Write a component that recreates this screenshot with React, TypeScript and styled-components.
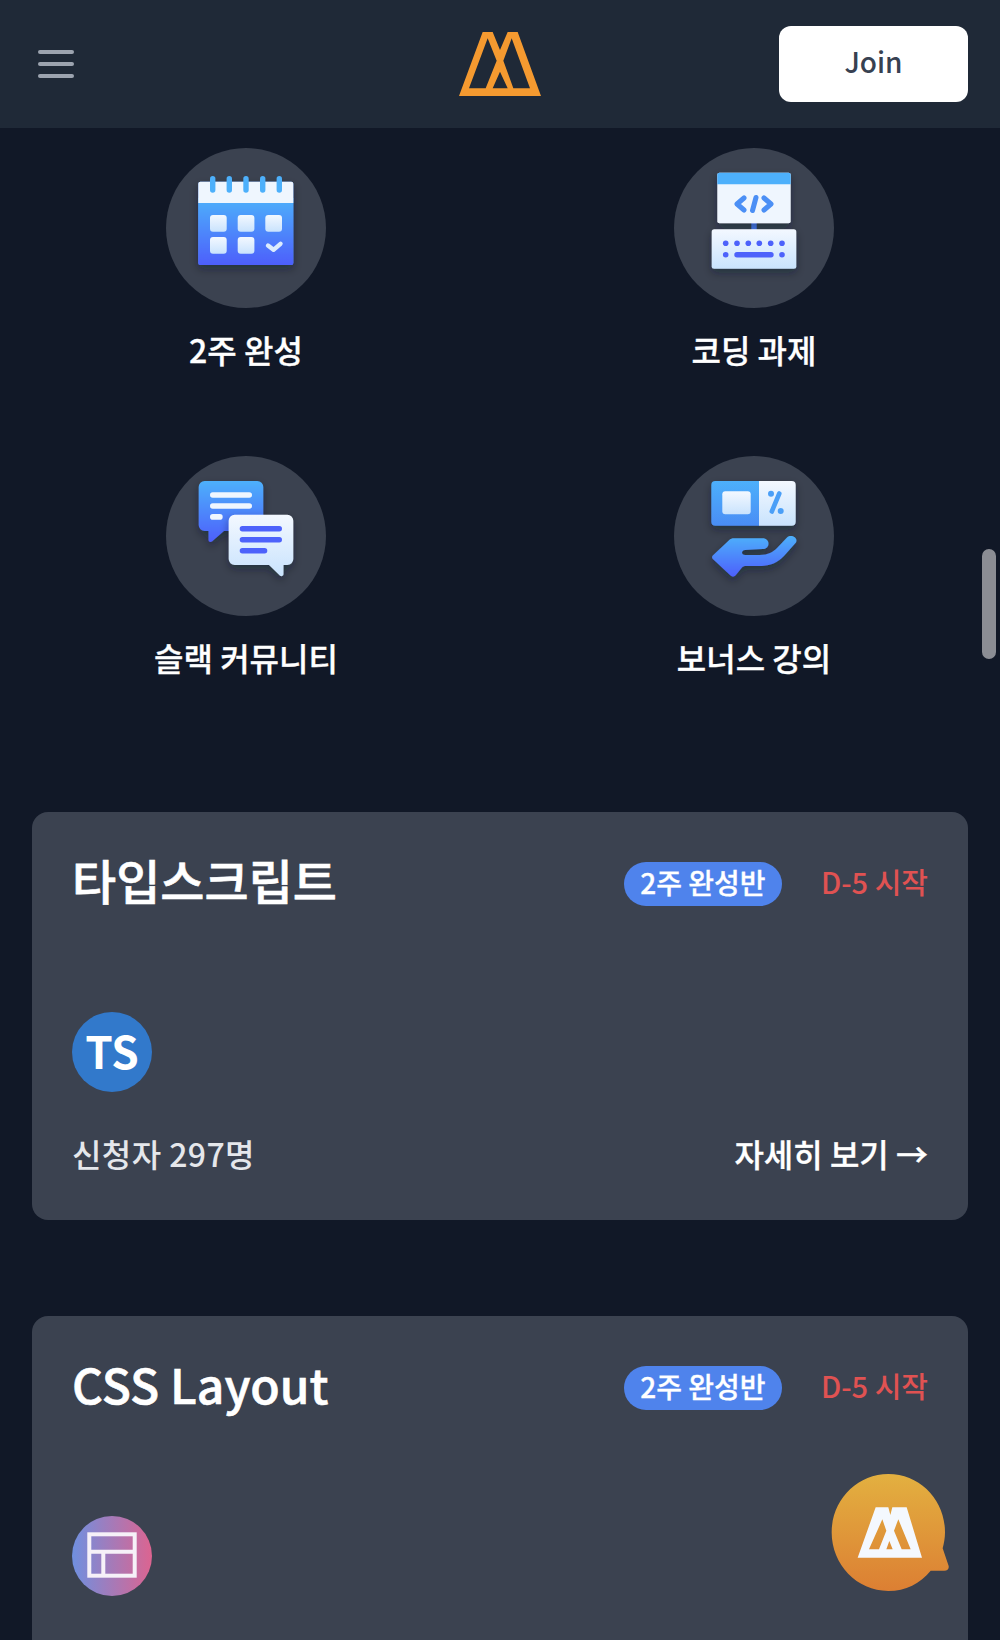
import * as React from "react";
import styled, { createGlobalStyle } from "styled-components";

const colors = {
	page: "#111827",
	header: "#1f2937",
	panel: "#3b4250",
	blue: "#4f83ec",
	red: "#e05252",
	text: "#e5e7eb",
	orange: "#f59a30",
};

const GlobalStyle = createGlobalStyle`
	html, body {
		margin: 0;
		padding: 0;
		height: 1640px;
		overflow: hidden;
		background: ${colors.page};
	}
	body {
		font-family: "Noto Sans CJK KR", "Noto Sans", sans-serif;
		color: #fff;
	}
`;

const Page = styled.div`
	height: 1640px;
	overflow: hidden;
	position: relative;
`;

const Header = styled.header`
	height: 128px;
	background: ${colors.header};
	display: grid;
	grid-template-columns: 1fr auto 1fr;
	align-items: center;
	padding: 0 32px;
	box-sizing: border-box;
`;

const Burger = styled.div`
	display: flex;
	flex-direction: column;
	gap: 8px;
	width: 36px;
	margin-left: 6px;
	span {
		display: block;
		height: 4px;
		border-radius: 2px;
		background: #9ca3af;
	}
`;

const JoinButton = styled.button`
	justify-self: end;
	width: 189px;
	height: 76px;
	padding: 0 0 6px;
	border: 0;
	border-radius: 12px;
	background: #fff;
	color: #374151;
	font-family: inherit;
	font-size: 28px;
	font-weight: 500;
`;

const Features = styled.section`
	display: grid;
	grid-template-columns: 1fr 1fr;
	column-gap: 80px;
	row-gap: 86px;
	padding: 20px 32px 0;
`;

const Feature = styled.div`
	display: flex;
	flex-direction: column;
	align-items: center;
	gap: 21px;
`;

const FeatureCircle = styled.div`
	width: 160px;
	height: 160px;
	border-radius: 50%;
	background: ${colors.panel};
	svg {
		display: block;
	}
`;

const FeatureLabel = styled.div`
	font-size: 32px;
	font-weight: 500;
	line-height: 41px;
	-webkit-text-stroke: 0.3px #fff;
`;

const Cards = styled.section`
	display: flex;
	flex-direction: column;
	gap: 96px;
	margin-top: 134px;
	padding: 0 32px;
`;

const Card = styled.article`
	box-sizing: border-box;
	min-height: 408px;
	background: ${colors.panel};
	border-radius: 16px;
	padding: 40px;
`;

const CardTop = styled.div`
	display: flex;
	align-items: center;
	height: 64px;
`;

const CardTitle = styled.h2`
	margin: 0 0 10px;
	flex: 1;
	font-size: 48px;
	font-weight: 500;
	line-height: 54px;
	-webkit-text-stroke: 0.6px #fff;
`;

const Badge = styled.span`
	display: flex;
	align-items: center;
	justify-content: center;
	box-sizing: border-box;
	width: 158px;
	height: 44px;
	padding-bottom: 4px;
	border-radius: 22px;
	background: ${colors.blue};
	font-size: 28px;
	font-weight: 500;
	-webkit-text-stroke: 0.3px #fff;
`;

const Start = styled.span`
	margin: 0 0 6px 39px;
	color: ${colors.red};
	font-size: 29px;
	font-weight: 500;
`;

const Avatar = styled.div<{ $bg: string }>`
	display: flex;
	align-items: center;
	justify-content: center;
	box-sizing: border-box;
	width: 80px;
	height: 80px;
	margin-top: 96px;
	border-radius: 50%;
	background: ${(p) => p.$bg};
	font-size: 44px;
	font-weight: 700;
	line-height: 1;
	padding-bottom: ${(p) => (p.$bg.startsWith("#") ? "4px" : "0")};
`;

const CardBottom = styled.div`
	display: flex;
	align-items: center;
	justify-content: space-between;
	height: 48px;
	margin-top: 40px;
	padding-bottom: 6px;
	box-sizing: border-box;
`;

const Count = styled.span`
	color: ${colors.text};
	font-size: 32px;
	font-weight: 500;
	letter-spacing: 0.4px;
`;

const More = styled.a`
	font-size: 32px;
	font-weight: 500;
	-webkit-text-stroke: 0.3px #fff;
`;

const ChatButton = styled.svg`
	position: absolute;
	left: 830px;
	top: 1472px;
	width: 120px;
	height: 120px;
`;

const Scrollbar = styled.div`
	position: absolute;
	left: 982px;
	top: 549px;
	width: 14px;
	height: 110px;
	border-radius: 7px;
	background: #8b8d94;
`;

const Logo = () => (
	<svg width="82" height="64" viewBox="42 36 246 192">
		<path
			fillRule="evenodd"
			fill={colors.orange}
			d="M42 228 113 36H143L165 90 188 36H218L288 228ZM128 55 72 205H122L155 122ZM200 55 255 205H205L175 122ZM165 155 143 205H188Z"
		/>
	</svg>
);

const Defs = () => (
	<defs>
		<linearGradient id="blue" x1="0" y1="0" x2="0" y2="1">
			<stop offset="0" stopColor="#4db0fb" />
			<stop offset="1" stopColor="#4d5ffb" />
		</linearGradient>
		<linearGradient id="sky" x1="0" y1="0" x2="0" y2="1">
			<stop offset="0" stopColor="#4db0fb" />
			<stop offset="1" stopColor="#4a8df5" />
		</linearGradient>
		<linearGradient id="ice" x1="0" y1="0" x2="0" y2="1">
			<stop offset="0" stopColor="#f3f8ff" />
			<stop offset="1" stopColor="#c9e3fd" />
		</linearGradient>
		<filter id="drop" x="-20%" y="-20%" width="140%" height="150%">
			<feDropShadow dx="0" dy="4" stdDeviation="4" floodColor="#111827" floodOpacity="0.4" />
		</filter>
	</defs>
);

const CalendarIcon = () => (
	<svg width="160" height="160" viewBox="0 0 160 160">
		<Defs />
		<g filter="url(#drop)">
			<rect x="32.3" y="33.7" width="95" height="83.3" rx="2" fill="#4a8df5" />
			<path d="M32.3 50V115a2 2 0 0 0 2 2H125.3a2 2 0 0 0 2-2V50Z" fill="url(#blue)" />
			<path d="M32.3 55V35.7a2 2 0 0 1 2-2H125.3a2 2 0 0 1 2 2V55Z" fill="#eff6fe" />
		</g>
		{[46.7, 63.3, 80, 96.7, 113.3].map((x) => (
			<rect key={x} x={x - 2.7} y="28" width="5.4" height="16.7" rx="2.7" fill="#4db0fb" />
		))}
		{[44, 71.7, 99.3].map((x) => (
			<rect key={x} x={x} y="67" width="16.7" height="16.7" rx="3" fill="url(#ice)" />
		))}
		{[44, 71.7].map((x) => (
			<rect key={x} x={x} y="89" width="16.7" height="16.7" rx="3" fill="url(#ice)" />
		))}
		<path d="M102 97.5l5.5 4.3 7-6" fill="none" stroke="#dcecfd" strokeWidth="4.4" strokeLinecap="round" strokeLinejoin="round" />
	</svg>
);

const CodeIcon = () => (
	<svg width="160" height="160" viewBox="0 0 160 160">
		<Defs />
		<rect x="77.3" y="75" width="5.4" height="7" fill="#4d7cfb" />
		<g filter="url(#drop)">
			<rect x="43.3" y="24.7" width="73.4" height="50.6" rx="2" fill="#eff6fe" />
			<path d="M43.3 36.3V26.7a2 2 0 0 1 2-2H114.7a2 2 0 0 1 2 2V36.3Z" fill="#4db0fb" />
			<rect x="37.7" y="81.3" width="84.6" height="39.4" rx="2.5" fill="url(#ice)" />
		</g>
		<path d="M70 50 63 56 70 62M90 50 97 56 90 62M82 49.5 78.5 62.5" fill="none" stroke="#4b8ff5" strokeWidth="5" strokeLinecap="round" strokeLinejoin="round" />
		{[51.7, 63, 74.3, 85.3, 96.7, 108].map((x) => (
			<circle key={x} cx={x} cy="95.3" r="2.8" fill="#4d62fb" />
		))}
		<circle cx="51.7" cy="106.7" r="2.8" fill="#4d62fb" />
		<circle cx="108" cy="106.7" r="2.8" fill="#4d62fb" />
		<rect x="60.3" y="104" width="39.4" height="5.4" rx="2.7" fill="#4d62fb" />
	</svg>
);

const ChatIcon = () => (
	<svg width="160" height="160" viewBox="0 0 160 160">
		<Defs />
		<g filter="url(#drop)">
			<path d="M38.7 25H91.3a6 6 0 0 1 6 6V69a6 6 0 0 1-6 6H58L46 85.5C44.5 86.5 42.5 86 42.5 84V75H38.7a6 6 0 0 1-6-6V31a6 6 0 0 1 6-6Z" fill="url(#blue)" />
		</g>
		<rect x="44" y="36.3" width="42" height="5.4" rx="2.7" fill="#eff6fe" />
		<rect x="44" y="47.3" width="42" height="5.4" rx="2.7" fill="#eff6fe" />
		<rect x="44" y="58" width="12.7" height="5.7" rx="2.8" fill="#eff6fe" />
		<g filter="url(#drop)">
			<path d="M68.7 58.7H121.3a6 6 0 0 1 6 6V103a6 6 0 0 1-6 6H117.5V118c0 2-2.2 2.8-3.7 1.5L103 109H68.7a6 6 0 0 1-6-6V64.7a6 6 0 0 1 6-6Z" fill="url(#ice)" />
		</g>
		<rect x="73.7" y="70" width="42.3" height="5.4" rx="2.7" fill="#4d62fb" />
		<rect x="73.7" y="81" width="42.3" height="5.4" rx="2.7" fill="#4d62fb" />
		<rect x="73.7" y="92" width="27.6" height="5.4" rx="2.7" fill="#4d62fb" />
	</svg>
);

const BonusIcon = () => (
	<svg width="160" height="160" viewBox="0 0 160 160">
		<Defs />
		<g filter="url(#drop)">
			<path d="M85 25V69.7H41.3a4 4 0 0 1-4-4V29a4 4 0 0 1 4-4Z" fill="url(#sky)" />
			<path d="M85 25H117.7a4 4 0 0 1 4 4V65.7a4 4 0 0 1-4 4H85Z" fill="url(#ice)" />
		</g>
		<rect x="48.3" y="35.3" width="28.4" height="23" rx="3" fill="url(#ice)" />
		<circle cx="97" cy="37.8" r="3" fill="#4b9ff7" />
		<circle cx="106.7" cy="55" r="3" fill="#4b9ff7" />
		<path d="M105.3 37.5 97.8 55.5" stroke="#4b9ff7" strokeWidth="4.6" strokeLinecap="round" />
		<g filter="url(#drop)">
			<path d="M38.8 99.5 55 84.2C56.5 82.8 58 82.3 60 82.3H88.5C96.5 82.3 96.5 93 88.5 93L71 94C67 94.3 67 99 71 99H86C94 99 99 96 103 92L113 81.5C117 78 124.5 81.5 122 86.5L110 100C104 106.5 96 110 87 110H72C70 110 69 110.5 68 111.5L61.5 119.5C60 121 58 121 56.5 119.5L38.8 103C37.8 102 37.8 100.5 38.8 99.5Z" fill="url(#blue)" />
		</g>
	</svg>
);

const LayoutGlyph = () => (
	<svg width="80" height="80" viewBox="0 0 80 80" fill="none" stroke="#f6f1f8" strokeWidth="4">
		<rect x="17.3" y="18.3" width="45.4" height="41.4" />
		<path d="M17.3 35.7H62.7M31.3 35.7V59.7" />
	</svg>
);

type Course = {
	title: string;
	avatar: React.ReactNode;
	avatarBg: string;
	count?: number;
};

const features = [
	{ label: "2주 완성", icon: <CalendarIcon /> },
	{ label: "코딩 과제", icon: <CodeIcon /> },
	{ label: "슬랙 커뮤니티", icon: <ChatIcon /> },
	{ label: "보너스 강의", icon: <BonusIcon /> },
];

const courses: Course[] = [
	{ title: "타입스크립트", avatar: "TS", avatarBg: "#3279cb", count: 297 },
	{
		title: "CSS Layout",
		avatar: <LayoutGlyph />,
		avatarBg: "linear-gradient(90deg, #6f90e0, #dc6490)",
	},
];

export default function App() {
	return (
		<Page>
			<GlobalStyle />
			<Header>
				<Burger>
					<span />
					<span />
					<span />
				</Burger>
				<Logo />
				<JoinButton>Join</JoinButton>
			</Header>
			<Features>
				{features.map((f) => (
					<Feature key={f.label}>
						<FeatureCircle>{f.icon}</FeatureCircle>
						<FeatureLabel>{f.label}</FeatureLabel>
					</Feature>
				))}
			</Features>
			<Cards>
				{courses.map((c) => (
					<Card key={c.title}>
						<CardTop>
							<CardTitle>{c.title}</CardTitle>
							<Badge>2주 완성반</Badge>
							<Start>D-5 시작</Start>
						</CardTop>
						<Avatar $bg={c.avatarBg}>{c.avatar}</Avatar>
						{c.count !== undefined && (
							<CardBottom>
								<Count>신청자 {c.count}명</Count>
								<More>자세히 보기 →</More>
							</CardBottom>
						)}
					</Card>
				))}
			</Cards>
			<ChatButton viewBox="60 36 360 360">
				<defs>
					<linearGradient id="fab" x1="0" y1="0" x2="0" y2="1">
						<stop offset="0" stopColor="#e3b040" />
						<stop offset="1" stopColor="#dc7f33" />
					</linearGradient>
				</defs>
				<path d="M235 42C331 42 405 120 405 217C405 234 402 250 398 265L415 315C419 325 413 332 403 332H362C331 370 287 393 235 393C141 393 65 314 65 217C65 120 141 42 235 42Z" fill="url(#fab)" />
				<path
					fillRule="evenodd"
					fill="#f4f8fe"
					d="M143 293 197 142H235L241 165 247 142H290L336 293ZM217 178 177 268H207L229 212ZM265 178 302 268H275L252 212ZM238 243 229 268H248Z"
				/>
			</ChatButton>
			<Scrollbar />
		</Page>
	);
}
